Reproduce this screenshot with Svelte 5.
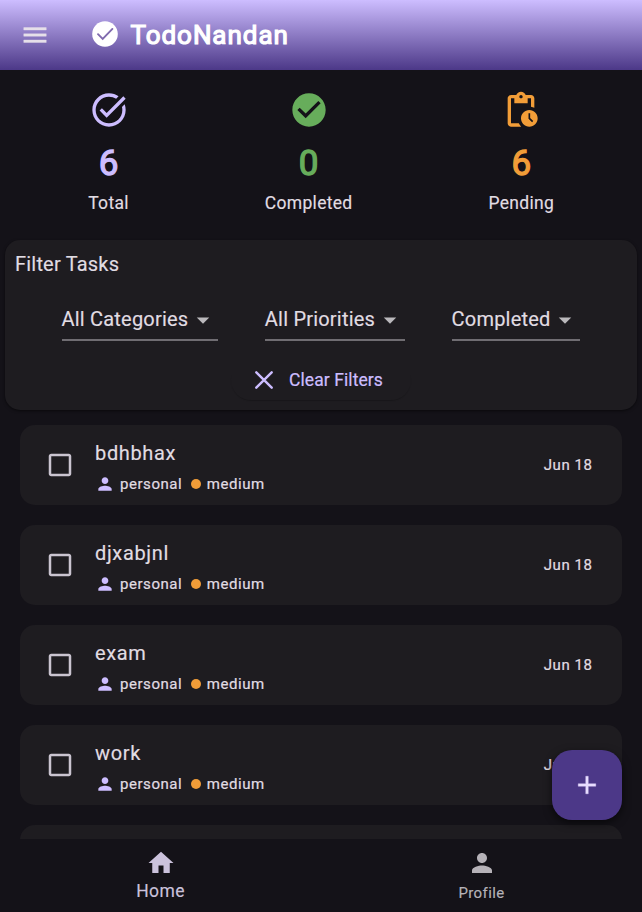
<script>
  const icons = {
    menu: 'M3 18h18v-2H3v2zm0-5h18v-2H3v2zm0-7v2h18V6H3z',
    task: 'M22 5.18 10.59 16.6l-4.24-4.24 1.41-1.41 2.83 2.83 10-10L22 5.18zM19.79 10.22c.13.57.21 1.17.21 1.78 0 4.42-3.58 8-8 8s-8-3.58-8-8 3.58-8 8-8c1.58 0 3.04.46 4.28 1.25l1.44-1.44C16.1 2.67 14.13 2 12 2 6.48 2 2 6.48 2 12s4.48 10 10 10 10-4.48 10-10c0-1.19-.22-2.33-.6-3.39l-1.61 1.61z',
    check: 'M12 2C6.48 2 2 6.48 2 12s4.48 10 10 10 10-4.48 10-10S17.52 2 12 2zm-2 15-5-5 1.41-1.41L10 14.17l7.59-7.59L19 8l-9 9z',
    pending: 'M17 12c-2.76 0-5 2.24-5 5s2.24 5 5 5 5-2.24 5-5-2.24-5-5-5zm1.65 7.35L16.5 17.2V14h1v2.79l1.85 1.85-.7.71zM18 3h-3.18C14.4 1.84 13.3 1 12 1s-2.4.84-2.82 2H6c-1.1 0-2 .9-2 2v15c0 1.1.9 2 2 2h6.11c-.59-.57-1.07-1.25-1.42-2H6V5h2v3h8V5h2v5.08c.71.1 1.38.31 2 .6V5c0-1.1-.9-2-2-2zm-6 2c-.55 0-1-.45-1-1s.45-1 1-1 1 .45 1 1-.45 1-1 1z',
    person: 'M12 12c2.21 0 4-1.79 4-4s-1.79-4-4-4-4 1.79-4 4 1.79 4 4 4zm0 2c-2.67 0-8 1.34-8 4v2h16v-2c0-2.66-5.33-4-8-4z',
    home: 'M10 20v-6h4v6h5v-8h3L12 3 2 12h3v8z',
    add: 'M19 13h-6v6h-2v-6H5v-2h6V5h2v6h6v2z',
    down: 'm7 10 5 5 5-5z',
    box: 'M19 5v14H5V5h14m0-2H5c-1.1 0-2 .9-2 2v14c0 1.1.9 2 2 2h14c1.1 0 2-.9 2-2V5c0-1.1-.9-2-2-2z'
  };
  const stats = [
    { icon: 'task', value: 6, label: 'Total', color: '#cdbdff' },
    { icon: 'check', value: 0, label: 'Completed', color: '#67ad5b' },
    { icon: 'pending', value: 6, label: 'Pending', color: '#f29d38' }
  ];
  const filters = ['All Categories', 'All Priorities', 'Completed'];
  const tasks = ['bdhbhax', 'djxabjnl', 'exam', 'work'];
</script>

{#snippet icon(name, size)}
  <svg width={size} height={size} viewBox="0 0 24 24" fill="currentColor" aria-hidden="true"><path d={icons[name]} /></svg>
{/snippet}

<div class="app">
  <header>
    <button class="menu" aria-label="Menu">{@render icon('menu', 30)}</button>
    <div class="brand">
      <svg width="26" height="26" viewBox="0 0 26 26" aria-hidden="true"><circle cx="13" cy="13" r="12.8" fill="#fff" /><path d="m6 13.2 4.7 4.7 9.7-10" fill="none" stroke="#806bae" stroke-width="1.9" stroke-linecap="round" /></svg>
      <h1>TodoNandan</h1>
    </div>
  </header>

  <section class="stats">
    {#each stats as s}
      <div class="stat" style:--tone={s.color}>
        {@render icon(s.icon, 40)}
        <strong>{s.value}</strong>
        <span>{s.label}</span>
      </div>
    {/each}
  </section>

  <section class="filters">
    <h2>Filter Tasks</h2>
    <div class="selects">
      {#each filters as f}
        <button class="select"><span>{f}</span>{@render icon('down', 30)}</button>
      {/each}
    </div>
    <button class="clear">
      <svg width="18" height="18" viewBox="0 0 18 18" aria-hidden="true"><path d="m1.3 1.3 15.4 15.4m0-15.4L1.3 16.7" fill="none" stroke="currentColor" stroke-width="2.4" stroke-linecap="round" /></svg>
      <span>Clear Filters</span>
    </button>
  </section>

  <main>
    {#each tasks as t}
      <article>
        <span class="box">{@render icon('box', 30)}</span>
        <div class="info">
          <h3>{t}</h3>
          <div class="meta">{@render icon('person', 20)}<span class="cat">personal</span><i></i><span>medium</span></div>
        </div>
        <time>Jun 18</time>
      </article>
    {/each}
    <article></article>
  </main>

  <nav>
    <button class="active">{@render icon('home', 30)}<span>Home</span></button>
    <button class="profile">{@render icon('person', 30)}<span>Profile</span></button>
  </nav>
  <button class="fab" aria-label="Add task">{@render icon('add', 30)}</button>
</div>

<style>
  :global(body) { margin: 0; background: #141218; }
  .app { position: relative; display: flex; flex-direction: column; height: 912px; overflow: hidden; background: #141218; color: #e1dde3; font-family: Roboto, sans-serif; }
  button { background: none; border: 0; padding: 0; margin: 0; color: inherit; font: inherit; }
  svg { display: block; flex: none; }
  h1, h2, h3 { margin: 0; }
  header { flex: none; height: 70px; display: flex; align-items: center; background: linear-gradient(#cdbdff, #4c3888); }
  .menu { margin-left: 20px; color: #e6e0e9; }
  .menu svg { stroke: currentColor; stroke-width: .3; }
  .brand { display: flex; align-items: center; gap: 12.5px; margin-left: 42px; color: #fff; }
  .brand svg { margin-top: -2px; }
  h1 { font-size: 26px; font-weight: 400; letter-spacing: .95px; line-height: 36px; -webkit-text-stroke: 1.2px currentColor; }
  .stats { flex: none; display: flex; justify-content: space-between; height: 170px; padding: 20px 87.8px 0 88.2px; box-sizing: border-box; }
  .stat { display: flex; flex-direction: column; align-items: center; }
  .stat svg { color: var(--tone); }
  .stat strong { margin-top: 11px; color: var(--tone); font-size: 35px; line-height: 46px; font-weight: 400; -webkit-text-stroke: 1.3px currentColor; }
  .stat span { margin-top: 4px; font-size: 17.5px; line-height: 25px; letter-spacing: .31px; -webkit-text-stroke: .15px currentColor; }
  .filters { flex: none; display: flex; flex-direction: column; height: 170px; margin: 0 5px; box-sizing: border-box; padding: 10px 10px 0; background: #1e1c20; border-radius: 15px; box-shadow: 0 1px 3px #0008; }
  h2 { font-size: 20px; font-weight: 400; line-height: 28px; letter-spacing: .2px; -webkit-text-stroke: .15px currentColor; }
  .selects { display: flex; justify-content: space-evenly; margin-top: 22px; }
  .select { display: flex; align-items: center; height: 41px; box-sizing: border-box; border-bottom: 2px solid #706d72; font-size: 20px; letter-spacing: .2px; -webkit-text-stroke: .15px currentColor; }
  .select span { padding-bottom: 2px; }
  .select svg { color: #bbb9bc; }
  .clear { align-self: center; display: flex; align-items: center; gap: 16px; height: 40px; margin-top: 19px; padding: 0 28px 0 24px; border-radius: 20px; color: #cdbdff; font-size: 17.5px; letter-spacing: .08px; -webkit-text-stroke: .2px currentColor; box-shadow: 0 1.5px 1px -.5px #0003; }
  main { flex: 1; min-height: 0; overflow: hidden; display: flex; flex-direction: column; gap: 20px; padding: 15px 20px 0; }
  article { flex: none; display: flex; align-items: center; height: 80px; padding: 0 29.5px 0 25px; box-sizing: border-box; background: #1e1c20; border-radius: 15px; }
  .box { color: #cac4d0; }
  .info { flex: 1; margin-left: 20px; padding-top: 2px; }
  h3 { height: 30px; font-size: 20px; font-weight: 400; line-height: 30px; letter-spacing: .65px; -webkit-text-stroke: .15px currentColor; }
  .meta { display: flex; align-items: center; height: 20px; margin-top: 6px; font-size: 15px; letter-spacing: .55px; -webkit-text-stroke: .2px currentColor; }
  .meta svg { color: #cdbdff; }
  .cat { margin-left: 5px; }
  i { width: 10px; height: 10px; border-radius: 50%; background: #f29d38; margin: 0 5.5px 0 9px; }
  time { font-size: 15px; letter-spacing: .55px; -webkit-text-stroke: .2px currentColor; }
  nav { flex: none; display: flex; height: 73px; }
  nav button { flex: 1; display: flex; flex-direction: column; align-items: center; padding-top: 9px; font-size: 17.5px; line-height: 25px; letter-spacing: .4px; color: #cbc2dc; -webkit-text-stroke: .15px currentColor; }
  nav span { margin-top: 1px; }
  nav .profile { color: #b6b2b8; font-size: 15px; }
  nav .profile span { margin-top: 3px; }
  .fab { position: absolute; right: 20px; bottom: 92.5px; width: 70px; height: 70px; display: grid; place-items: center; border-radius: 20px; background: #4c3888; color: #e8ddff; box-shadow: 0 3px 8px #0009; }
  .fab svg { stroke: currentColor; stroke-width: .3; }
</style>
